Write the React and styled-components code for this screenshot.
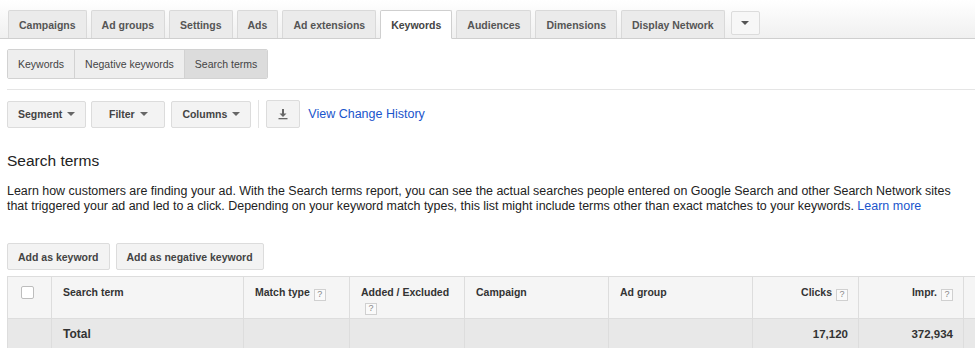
import React from "react";
import styled, { createGlobalStyle } from "styled-components";

const Global = createGlobalStyle`
  html, body { margin: 0; padding: 0; background: #fff; overflow: hidden; }
  body { font-family: "Liberation Sans", Arial, sans-serif; color: #222; }
  * { box-sizing: border-box; }
`;

const Page = styled.div`
  width: 975px;
  height: 348px;
  overflow: hidden;
`;

const TabBar = styled.div`
  display: flex;
  align-items: flex-end;
  gap: 4px;
  height: 39px;
  padding: 0 0 0 8px;
  background: linear-gradient(#ffffff, #f0f0f0);
  border-bottom: 1px solid #cfcfcf;
`;

const Tab = styled.div`
  height: ${(p) => (p.$active ? "29px" : "28px")};
  margin-bottom: ${(p) => (p.$active ? "-1px" : "0")};
  padding: 0 10px;
  display: flex;
  align-items: center;
  font-size: 10.5px;
  font-weight: bold;
  color: ${(p) => (p.$active ? "#444" : "#555")};
  background: ${(p) => (p.$active ? "#fff" : "#ebebeb")};
  border: 1px solid ${(p) => (p.$active ? "#cfcfcf" : "#d9d9d9")};
  border-bottom: ${(p) => (p.$active ? "1px solid #fff" : "none")};
  border-radius: 2px 2px 0 0;
`;

const MoreButton = styled.div`
  width: 29px;
  height: 24px;
  margin: 0 0 3px 2px;
  align-self: flex-end;
  display: flex;
  align-items: center;
  justify-content: center;
  background: #f7f7f7;
  border: 1px solid #dcdcdc;
  border-radius: 2px;
`;

const Caret = styled.span`
  width: 0;
  height: 0;
  border-left: 4px solid transparent;
  border-right: 4px solid transparent;
  border-top: 4px solid ${(p) => p.$color || "#555"};
  display: inline-block;
`;

const Body = styled.div`
  padding: 0 0 0 7px;
`;

const SubTabs = styled.div`
  display: inline-flex;
  margin-top: 10px;
  height: 30px;
  border: 1px solid #d2d2d2;
  border-radius: 2px;
  overflow: hidden;
`;

const SubTab = styled.div`
  display: flex;
  align-items: center;
  padding: 0 10px;
  font-size: 10.5px;
  color: #444;
  background: ${(p) => (p.$active ? "#dcdcdc" : "#eeeeee")};
  & + & { border-left: 1px solid #d2d2d2; }
`;

const Divider = styled.div`
  height: 1px;
  background: #e5e5e5;
  margin-top: 10px;
`;

const Toolbar = styled.div`
  display: flex;
  align-items: center;
  margin-top: 10px;
  height: 28px;
`;

const Button = styled.div`
  height: 27px;
  min-width: ${(p) => p.$min || "0"};
  padding: 0 10px;
  margin-right: ${(p) => p.$mr || "5px"};
  display: flex;
  align-items: center;
  justify-content: center;
  gap: 5px;
  font-size: 10.5px;
  font-weight: bold;
  color: #444;
  background: #f3f3f3;
  border: 1px solid #dcdcdc;
  border-radius: 2px;
`;

const VSep = styled.div`
  width: 1px;
  height: 28px;
  background: #e3e3e3;
  margin: 0 7px 0 2px;
`;

const IconButton = styled.div`
  width: 34px;
  height: 28px;
  display: flex;
  align-items: center;
  justify-content: center;
  background: #f3f3f3;
  border: 1px solid #dcdcdc;
  border-radius: 2px;
  margin-right: 8px;
`;

const Link = styled.a`
  color: #1a55cc;
  text-decoration: none;
  font-size: ${(p) => p.$size || "12.5px"};
  cursor: pointer;
`;

const Heading = styled.h2`
  margin: 24px 0 0;
  font-size: 15.5px;
  font-weight: normal;
  color: #222;
  line-height: 18px;
`;

const Para = styled.p`
  margin: 14px 10px 0 0;
  font-size: 12.45px;
  line-height: 15px;
  color: #222;
`;

const ActionRow = styled.div`
  display: flex;
  margin-top: 29px;
`;

const TableWrap = styled.div`
  margin-top: 6px;
  width: 1100px;
`;

const Table = styled.table`
  border-collapse: collapse;
  table-layout: fixed;
  width: 1100px;
`;

const Th = styled.th`
  width: ${(p) => p.$w};
  height: 42px;
  padding: 8px 10px 0 11px;
  vertical-align: top;
  text-align: ${(p) => (p.$right ? "right" : "left")};
  font-size: 10.5px;
  font-weight: bold;
  color: #333;
  background: #f5f5f5;
  border: 1px solid #dddddd;
  line-height: 14px;
`;

const Td = styled.td`
  height: 30px;
  padding: 0 10px 0 11px;
  text-align: ${(p) => (p.$right ? "right" : "left")};
  font-size: ${(p) => p.$size || "11.5px"};
  font-weight: bold;
  color: #333;
  background: #e8e8e8;
  border: 1px solid #dddddd;
`;

const Checkbox = styled.span`
  display: block;
  width: 13px;
  height: 13px;
  margin: 1px 0 0 2px;
  background: #fff;
  border: 1px solid #bdbdbd;
  border-radius: 2px;
`;

const Help = styled.span`
  display: inline-flex;
  align-items: center;
  justify-content: center;
  width: 12px;
  height: 12px;
  margin-left: 4px;
  vertical-align: -1px;
  font-size: 9px;
  font-weight: normal;
  color: #888;
  background: #fafafa;
  border: 1px solid #d0d0d0;
  line-height: 1;
`;

const tabs = [
  "Campaigns",
  "Ad groups",
  "Settings",
  "Ads",
  "Ad extensions",
  "Keywords",
  "Audiences",
  "Dimensions",
  "Display Network",
];

export default function App() {
  return (
    <Page>
      <Global />
      <TabBar>
        {tabs.map((t) => (
          <Tab key={t} $active={t === "Keywords"}>
            {t}
          </Tab>
        ))}
        <MoreButton>
          <Caret $color="#555" />
        </MoreButton>
      </TabBar>
      <Body>
        <SubTabs>
          <SubTab>Keywords</SubTab>
          <SubTab>Negative keywords</SubTab>
          <SubTab $active>Search terms</SubTab>
        </SubTabs>
        <Divider />
        <Toolbar>
          <Button $min="78px">
            Segment <Caret $color="#666" />
          </Button>
          <Button $min="74px" $mr="6px">
            Filter <Caret $color="#666" />
          </Button>
          <Button $min="80px">
            Columns <Caret $color="#666" />
          </Button>
          <VSep />
          <IconButton>
            <svg width="10" height="12" viewBox="0 0 10 12">
              <rect x="4" y="1" width="2" height="5" fill="#666" />
              <polygon points="1.5,5.5 8.5,5.5 5,9" fill="#666" />
              <rect x="0.5" y="10" width="9" height="1.3" fill="#666" />
            </svg>
          </IconButton>
          <Link>View Change History</Link>
        </Toolbar>
        <Heading>Search terms</Heading>
        <Para>
          Learn how customers are finding your ad. With the Search terms report, you can see the actual
          searches people entered on Google Search and other Search Network sites that triggered your ad
          and led to a click. Depending on your keyword match types, this list might include terms other
          than exact matches to your keywords. <Link>Learn more</Link>
        </Para>
        <ActionRow>
          <Button $mr="6px">Add as keyword</Button>
          <Button>Add as negative keyword</Button>
        </ActionRow>
        <TableWrap>
          <Table>
            <thead>
              <tr>
                <Th $w="44px">
                  <Checkbox />
                </Th>
                <Th $w="192px">Search term</Th>
                <Th $w="106px">
                  Match type<Help>?</Help>
                </Th>
                <Th $w="115px">
                  Added / Excluded<Help>?</Help>
                </Th>
                <Th $w="144px">Campaign</Th>
                <Th $w="144px">Ad group</Th>
                <Th $w="106px" $right>
                  Clicks<Help>?</Help>
                </Th>
                <Th $w="105px" $right>
                  Impr.<Help>?</Help>
                </Th>
                <Th $w="144px" $right></Th>
              </tr>
            </thead>
            <tbody>
              <tr>
                <Td></Td>
                <Td $size="12px">Total</Td>
                <Td></Td>
                <Td></Td>
                <Td></Td>
                <Td></Td>
                <Td $right>17,120</Td>
                <Td $right>372,934</Td>
                <Td></Td>
              </tr>
            </tbody>
          </Table>
        </TableWrap>
      </Body>
    </Page>
  );
}
